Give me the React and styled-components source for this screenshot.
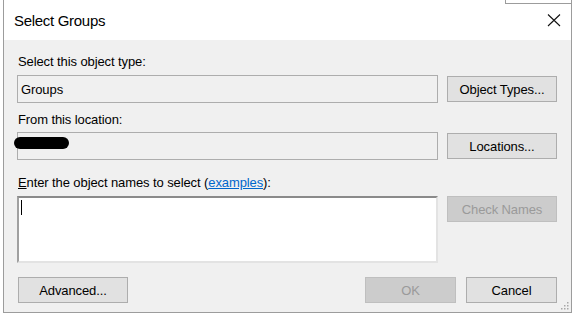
import styled, { createGlobalStyle } from 'styled-components';

const GlobalStyle = createGlobalStyle`
  html, body {
    margin: 0;
    padding: 0;
    background: #ffffff;
  }
  body {
    font-family: 'Liberation Sans', Arial, sans-serif;
  }
`;

const Page = styled.div`
  width: 575px;
  height: 315px;
  background: #fff;
  overflow: hidden;
`;

const Window = styled.div`
  position: relative;
  margin-left: 3px;
  width: 567px;
  height: 312px;
  border: 1px solid #9c9c9c;
  border-top: none;
  display: flex;
  flex-direction: column;
`;

const TitleBar = styled.div`
  position: relative;
  height: 40px;
  background: #fff;
  display: flex;
  align-items: center;
  justify-content: space-between;
  padding: 0 10px 0 10px;
`;

const Title = styled.span`
  font-size: 15px;
  letter-spacing: -0.3px;
  color: #000;
  margin-top: 1px;
`;

const CloseButton = styled.button`
  border: none;
  background: none;
  padding: 0;
  width: 14px;
  height: 14px;
  display: flex;
  cursor: pointer;
`;

const CornerEdge = styled.div`
  position: absolute;
  top: 0;
  right: -1px;
  width: 66px;
  height: 3px;
  border-left: 1px solid #9c9c9c;
  border-bottom: 1px solid #9c9c9c;
`;

const Body = styled.div`
  flex: 1;
  background: #f0f0f0;
  padding: 14px 14px 0 13px;
  display: flex;
  flex-direction: column;
`;

const Label = styled.div`
  font-size: 13px;
  line-height: 16px;
  letter-spacing: -0.1px;
  color: #000;
  margin-top: ${(p) => p.$top || 0}px;
  padding-left: 1px;
`;

const Row = styled.div`
  display: flex;
  align-items: ${(p) => (p.$top ? 'flex-start' : 'center')};
  gap: 9px;
  margin-top: ${(p) => p.$gap || 0}px;
`;

const Field = styled.div`
  position: relative;
  box-sizing: border-box;
  width: 421px;
  height: 28px;
  border: 1px solid #adadad;
  background: #f0f0f0;
  font-size: 13px;
  letter-spacing: -0.1px;
  display: flex;
  align-items: center;
  padding-left: 3px;
`;

const Redacted = styled.div`
  position: absolute;
  left: -4px;
  top: 4px;
  width: 55px;
  height: 12px;
  border-radius: 6px;
  background: #000;
`;

const NamesBox = styled.div`
  box-sizing: border-box;
  width: 421px;
  height: 67px;
  background: #fff;
  border-top: 2px solid #8a8a8a;
  border-left: 2px solid #a0a0a0;
  border-right: 2px solid #e3e3e3;
  border-bottom: 2px solid #e3e3e3;
  margin-top: 1px;
  padding: 2px 0 0 2px;
`;

const Caret = styled.div`
  width: 1px;
  height: 15px;
  background: #000;
`;

const Button = styled.button`
  box-sizing: border-box;
  width: ${(p) => p.$w || 110}px;
  height: 26px;
  border: 1px solid ${(p) => (p.disabled ? '#bfbfbf' : '#adadad')};
  background: ${(p) => (p.disabled ? '#cccccc' : '#e1e1e1')};
  color: ${(p) => (p.disabled ? '#9a9a9a' : '#000')};
  font-family: 'Liberation Sans', Arial, sans-serif;
  font-size: 13px;
  letter-spacing: -0.1px;
  padding: 0;
  margin-top: ${(p) => p.$top || 0}px;
`;

const Footer = styled.div`
  display: flex;
  align-items: center;
  margin-top: 14px;
  padding-left: 1px;
`;

const Spacer = styled.div`
  flex: 1;
`;

const FooterRight = styled.div`
  display: flex;
  gap: 10px;
`;

const Link = styled.a`
  color: #0066cc;
  text-decoration: underline;
`;

const Key = styled.span`
  text-decoration: underline;
`;

const Grip = styled.svg`
  position: absolute;
  right: 2px;
  bottom: 2px;
`;

export default function App() {
  return (
    <Page>
      <GlobalStyle />
      <Window>
        <TitleBar>
          <Title>Select Groups</Title>
          <CloseButton aria-label="Close">
            <svg width="14" height="14" viewBox="0 0 14 14">
              <path d="M1 1.5 L13 13 M13 1.5 L1 13" stroke="#111" strokeWidth="1.1" fill="none" />
            </svg>
          </CloseButton>
          <CornerEdge />
        </TitleBar>
        <Body>
          <Label>Select this object type:</Label>
          <Row $gap={5}>
            <Field>Groups</Field>
            <Button>Object Types...</Button>
          </Row>
          <Label $top={9}>From this location:</Label>
          <Row $gap={4}>
            <Field>
              <Redacted />
            </Field>
            <Button>Locations...</Button>
          </Row>
          <Label $top={15}>
            <Key>E</Key>nter the object names to select (<Link>examples</Link>):
          </Label>
          <Row $gap={4} $top>
            <NamesBox>
              <Caret />
            </NamesBox>
            <Button disabled $top={1}>Check Names</Button>
          </Row>
          <Footer>
            <Button $w={110}>Advanced...</Button>
            <Spacer />
            <FooterRight>
              <Button disabled $w={91}>OK</Button>
              <Button $w={91}>Cancel</Button>
            </FooterRight>
          </Footer>
        </Body>
        <Grip width="8" height="8" viewBox="0 0 8 8">
          <rect x="6" y="0" width="1.5" height="1.5" fill="#a8a8a8" />
          <rect x="3" y="3" width="1.5" height="1.5" fill="#a8a8a8" />
          <rect x="6" y="3" width="1.5" height="1.5" fill="#a8a8a8" />
          <rect x="0" y="6" width="1.5" height="1.5" fill="#a8a8a8" />
          <rect x="3" y="6" width="1.5" height="1.5" fill="#a8a8a8" />
          <rect x="6" y="6" width="1.5" height="1.5" fill="#a8a8a8" />
        </Grip>
      </Window>
    </Page>
  );
}
